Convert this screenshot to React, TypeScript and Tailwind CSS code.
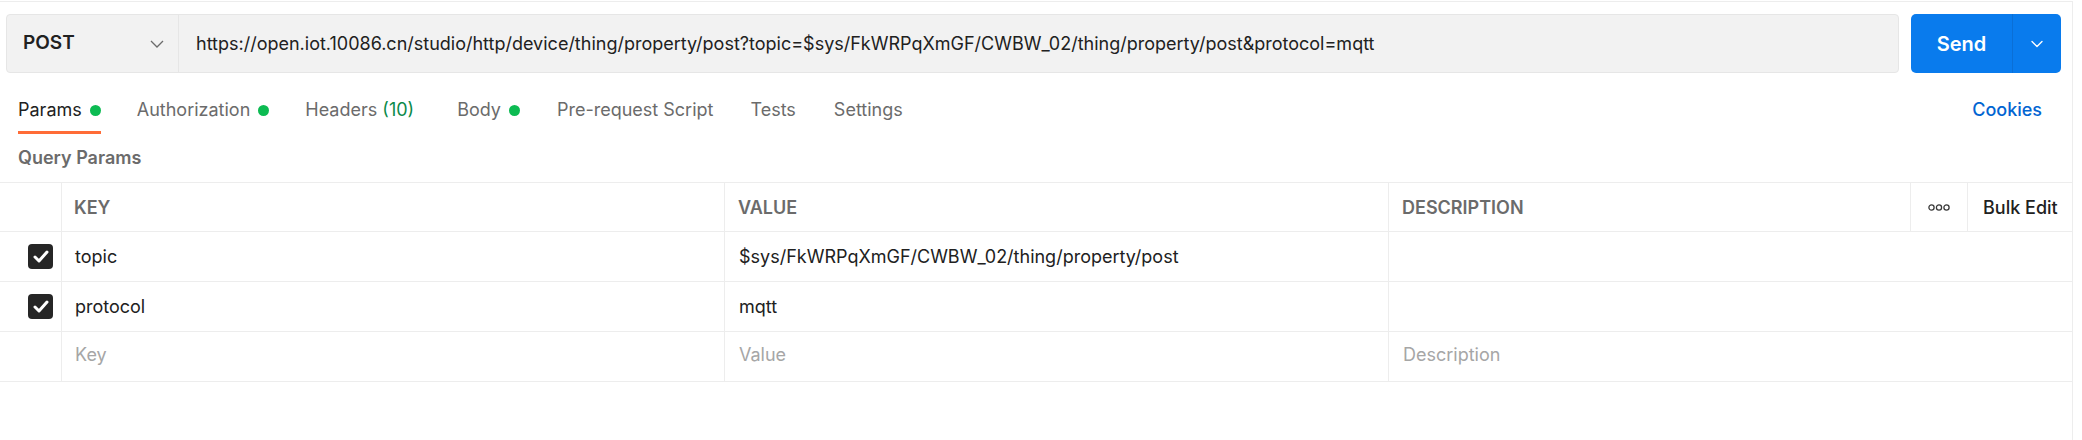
import { ChevronDown } from "lucide-react";

const URL =
  "https://open.iot.10086.cn/studio/http/device/thing/property/post?topic=$sys/FkWRPqXmGF/CWBW_02/thing/property/post&protocol=mqtt";

type Tab = { label: string; dot?: boolean; count?: string; active?: boolean; extra?: string };

const TABS: Tab[] = [
  { label: "Params", dot: true, active: true },
  { label: "Authorization", dot: true },
  { label: "Headers", count: "(10)", extra: "mr-[43px]" },
  { label: "Body", dot: true, extra: "mr-[37px]" },
  { label: "Pre-request Script", extra: "mr-[37px]" },
  { label: "Tests", extra: "mr-[38px]" },
  { label: "Settings" },
];

const ROWS = [
  { key: "topic", value: "$sys/FkWRPqXmGF/CWBW_02/thing/property/post" },
  { key: "protocol", value: "mqtt" },
];

function Checkbox() {
  return (
    <div className="w-[25px] h-[25px] rounded-[4px] bg-[#262626] flex items-center justify-center">
      <svg width="16" height="13" viewBox="0 0 16 13" fill="none">
        <path d="M2 7 L6 11 L14 2" stroke="white" strokeWidth="3" strokeLinecap="round" strokeLinejoin="round" />
      </svg>
    </div>
  );
}

function Dots() {
  return (
    <svg width="22" height="7" viewBox="0 0 22 7" fill="none">
      {[3.5, 11, 18.5].map((cx) => (
        <circle key={cx} cx={cx} cy="3.5" r="2.6" stroke="#3a3a3a" strokeWidth="1.3" />
      ))}
    </svg>
  );
}

export default function App() {
  return (
    <div className="w-[2082px] h-[440px] bg-white font-['Inter',sans-serif] text-[#212121]">
      <div className="w-[2073px] h-[439px] mt-px border-t border-r border-[#ededed]">
        {/* request bar */}
        <div className="flex pl-[6px] pr-[11px] pt-[12px] gap-[12px]">
          <div className="flex-1 h-[59px] flex bg-[#f2f2f2] border border-[#e6e6e6] rounded-[4px]">
            <div className="w-[172px] flex items-center justify-between pl-[16px] pr-[14px] border-r border-[#e6e6e6]">
              <span className="text-[19px] font-semibold">POST</span>
              <svg width="14" height="8" viewBox="0 0 14 8" fill="none">
                <path d="M1 1 L7 7 L13 1" stroke="#6b6b6b" strokeWidth="1.3" />
              </svg>
            </div>
            <div className="flex items-center pl-[17px] text-[18px] whitespace-nowrap overflow-hidden">{URL}</div>
          </div>
          <div className="w-[150px] h-[59px] flex rounded-[5px] bg-[#097bed] text-white">
            <div className="w-[102px] flex items-center justify-center text-[20px] font-semibold border-r border-[#0a6fd6]">
              Send
            </div>
            <div className="flex-1 flex items-center justify-center">
              <ChevronDown size={20} strokeWidth={1.6} />
            </div>
          </div>
        </div>

        {/* tabs */}
        <div className="flex justify-between items-start mt-[17px] pl-[18px] pr-[30px]">
          <div className="flex">
            {TABS.map((t) => (
              <div
                key={t.label}
                className={`h-[44px] pt-[9px] border-b-[3px] flex items-start gap-[8px] text-[18px] leading-[22px] ${
                  t.active ? "border-[#ff6c37] text-[#212121]" : "border-transparent text-[#6b6b6b]"
                } ${t.extra ?? "mr-[36px]"}`}
              >
                <span>
                  {t.label}
                  {t.count && <span className="text-[#0b8a4a]"> {t.count}</span>}
                </span>
                {t.dot && <span className="w-[11px] h-[11px] rounded-full bg-[#0cbb52] mt-[6px]" />}
              </div>
            ))}
          </div>
          <div className="pt-[9px] text-[18px] leading-[22px] font-medium text-[#0265d2]">Cookies</div>
        </div>

        <div className="mt-[13px] pl-[18px] text-[18px] leading-[22px] font-semibold text-[#6b6b6b]">Query Params</div>

        {/* table */}
        <div className="mt-[13px] text-[18px]">
          <div className="flex h-[50px] border-y border-[#ededed] font-semibold text-[#6b6b6b]">
            <div className="w-[61px]" />
            <div className="w-[663px] border-l border-[#ededed] flex items-center pl-[12px]">KEY</div>
            <div className="w-[664px] border-l border-[#ededed] flex items-center pl-[13px]">VALUE</div>
            <div className="w-[522px] border-l border-[#ededed] flex items-center pl-[13px]">DESCRIPTION</div>
            <div className="w-[57px] border-l border-[#ededed] flex items-center justify-center">
              <Dots />
            </div>
            <div className="flex-1 border-l border-[#ededed] flex items-center pl-[15px] text-[#212121] font-medium">
              Bulk Edit
            </div>
          </div>
          {ROWS.map((r) => (
            <div key={r.key} className="flex h-[50px] border-b border-[#ededed]">
              <div className="w-[61px] flex items-center pl-[28px]">
                <Checkbox />
              </div>
              <div className="w-[663px] border-l border-[#ededed] flex items-center pl-[13px]">{r.key}</div>
              <div className="w-[664px] border-l border-[#ededed] flex items-center pl-[14px]">{r.value}</div>
              <div className="flex-1 border-l border-[#ededed]" />
            </div>
          ))}
          <div className="flex h-[50px] border-b border-[#ededed] text-[#a6a6a6]">
            <div className="w-[61px]" />
            <div className="w-[663px] border-l border-[#ededed] flex items-center pl-[13px] pb-[4px]">Key</div>
            <div className="w-[664px] border-l border-[#ededed] flex items-center pl-[14px] pb-[4px]">Value</div>
            <div className="flex-1 border-l border-[#ededed] flex items-center pl-[14px] pb-[4px]">Description</div>
          </div>
        </div>
      </div>
    </div>
  );
}
